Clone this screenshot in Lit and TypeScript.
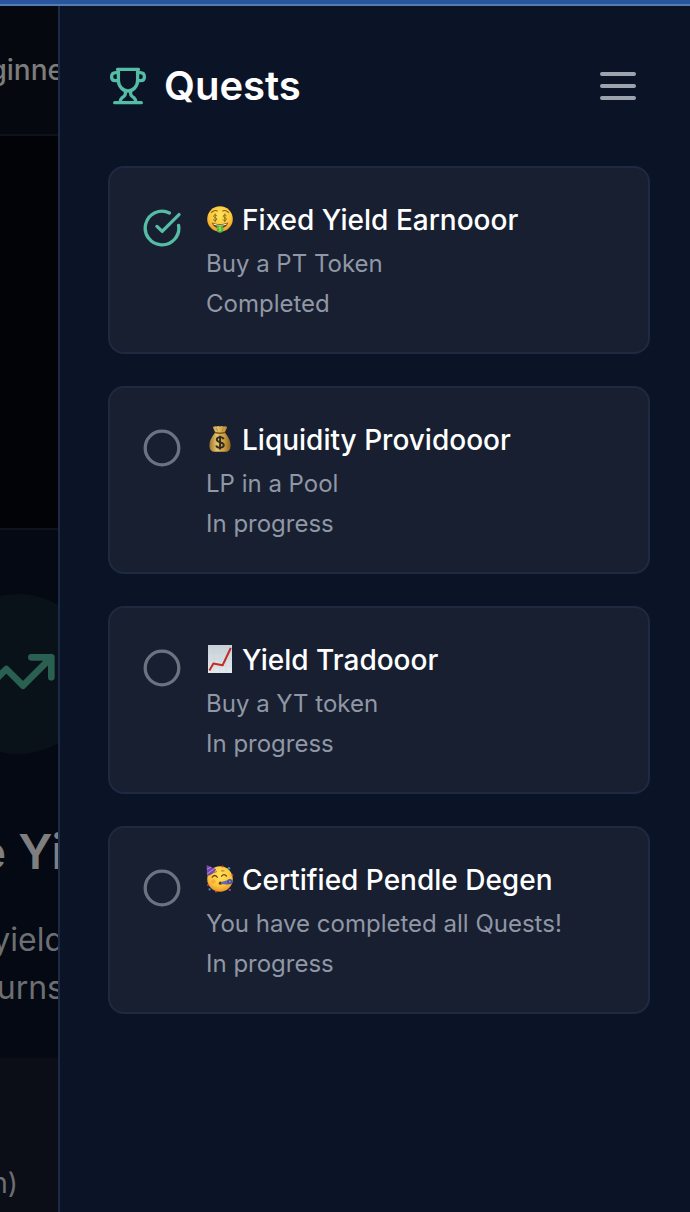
import { LitElement, html, css, svg, TemplateResult } from "lit";
import { customElement, property } from "lit/decorators.js";

interface Quest {
  emoji: string;
  title: string;
  description: string;
  done: boolean;
}

const quests: Quest[] = [
  { emoji: "money-face", title: "Fixed Yield Earnooor", description: "Buy a PT Token", done: true },
  { emoji: "money-bag", title: "Liquidity Providooor", description: "LP in a Pool", done: false },
  { emoji: "chart", title: "Yield Tradooor", description: "Buy a YT token", done: false },
  { emoji: "party-face", title: "Certified Pendle Degen", description: "You have completed all Quests!", done: false },
];

const face = svg`
  <defs>
    <radialGradient id="skin" cx="50%" cy="35%" r="65%">
      <stop offset="0" stop-color="#ffe45c"></stop>
      <stop offset="0.65" stop-color="#fcc63a"></stop>
      <stop offset="1" stop-color="#e8952a"></stop>
    </radialGradient>
  </defs>
  <circle cx="14" cy="13" r="12.8" fill="url(#skin)"></circle>`;

const emojis: Record<string, TemplateResult> = {
  "money-face": svg`
    ${face}
    <path d="M5.5 6.4Q8.5 3.6 11.3 5M16.7 5Q19.5 3.6 22.5 6.4" fill="none" stroke="#8a5a16" stroke-width="1.1" stroke-linecap="round"></path>
    <g fill="none" stroke="#8a701c" stroke-width="1" stroke-linecap="round">
      <path d="M10.8 9.8C9.6 8.4 7.4 8.9 7.6 10.3C7.8 11.8 10.7 11.4 10.8 13.1C10.8 14.8 8.2 15.1 7.2 13.7M9.2 8V15.8"></path>
      <path d="M20.4 9.8C19.2 8.4 17 8.9 17.2 10.3C17.4 11.8 20.3 11.4 20.4 13.1C20.4 14.8 17.8 15.1 16.8 13.7M18.8 8V15.8"></path>
    </g>
    <path d="M5.8 16.6Q14 20 22.2 16.6Q20.6 22.4 14 22.4Q7.4 22.4 5.8 16.6Z" fill="#72400f"></path>
    <path d="M7.2 17.6Q14 20.2 20.8 17.6L20.2 18.8Q14 21 7.8 18.8Z" fill="#fff6df"></path>
    <path d="M10.8 19.2Q14 20 17.2 19.2V24.4Q16.4 26.8 14 26.8Q11.6 26.8 10.8 24.4Z" fill="#50b83b"></path>
    <path d="M14.9 21.2Q13 20.7 13.1 22.1Q14.9 22.6 14.9 23.8Q14.4 24.9 13 24.3" fill="none" stroke="#bdf089" stroke-width="0.9"></path>`,
  "money-bag": svg`
    <defs>
      <linearGradient id="bag" x1="0" x2="1">
        <stop offset="0" stop-color="#9d7427"></stop>
        <stop offset="0.35" stop-color="#e5c46d"></stop>
        <stop offset="0.7" stop-color="#c99c40"></stop>
        <stop offset="1" stop-color="#8b641f"></stop>
      </linearGradient>
    </defs>
    <path d="M9.2 6.4L6.8 1.2Q8.6 -.2 10.4 .6Q12.2 -.6 14 .4Q16 -.6 17.6 .6Q19.6 -.2 21.2 1.2L18.8 6.4Q25 13.6 24.6 20.2Q24.2 25.6 19.4 25.8H8.6Q3.8 25.6 3.4 20.2Q3 13.6 9.2 6.4Z" fill="url(#bag)"></path>
    <path d="M8.8 6.4Q14 8 19.2 6.4" fill="none" stroke="#7a551a" stroke-width="1.5"></path>
    <path d="M10.4 1.8L11.6 5.4M17.2 1.8L16.2 5.4" stroke="#a77c30" stroke-width="0.8"></path>
    <path d="M17.6 13.2C16.8 10.4 10.8 10.4 10.8 13.8C10.8 17.2 17.8 15.4 17.8 19C17.8 22.4 11 22.6 10.2 19.4M14.1 9.8V23.4" fill="none" stroke="#302b1e" stroke-width="1.9"></path>`,
  chart: svg`
    <defs>
      <linearGradient id="paper" x1="0" y1="0" x2="0" y2="1">
        <stop offset="0" stop-color="#c5d0d8"></stop>
        <stop offset="1" stop-color="#e4eaee"></stop>
      </linearGradient>
    </defs>
    <rect x="2" y="-1" width="24" height="28" fill="url(#paper)"></rect>
    <path d="M8 -1V27M14 -1V27M20 -1V27M2 6H26M2 13H26M2 20H26" stroke="#bfcbd3" stroke-width="0.3"></path>
    <path d="M3.4 24.4L7.4 17.4L16.6 19.2L24.8 2" fill="none" stroke="#c42c24" stroke-width="2" stroke-linejoin="round"></path>`,
  "party-face": svg`
    ${face}
    <path d="M1 10L.6 -1L10.2 3.2Q7.4 8.8 1 10Z" fill="#7546ad"></path>
    <path d="M1 3.2L5 1.2M1.2 7.8L8.4 2.8" stroke="#b27bd4" stroke-width="1.1"></path>
    <path d="M6.2 11.2Q8.8 7.8 11.2 11.2M15.6 10.2Q18 7.2 20.4 10" fill="none" stroke="#6d430f" stroke-width="1.3" stroke-linecap="round"></path>
    <path d="M8 6.6L10.6 5.6M15.4 4.8L18 5" stroke="#a46a1b" stroke-width="0.9" stroke-linecap="round"></path>
    <circle cx="7.4" cy="15.4" r="2.2" fill="#f29a3c" opacity="0.6"></circle>
    <circle cx="14.4" cy="17.2" r="1.6" fill="#6e3513"></circle>
    <path d="M15.2 16L22.4 14V18.8L15.2 18Z" fill="#6269b4"></path>
    <circle cx="23.8" cy="15.6" r="2.6" fill="#4d4f9a"></circle>
    <circle cx="23.8" cy="15.6" r="1" fill="#9585cc"></circle>
    <circle cx="16.6" cy="0.6" r="1" fill="#dd3c3c"></circle>
    <circle cx="23" cy="2.2" r="1.2" fill="#4285cf"></circle>
    <circle cx="26.4" cy="9" r="1" fill="#d43b50"></circle>
    <circle cx="2" cy="19" r="1" fill="#d43b50"></circle>
    <circle cx="3.6" cy="23.4" r="1.1" fill="#498bd2"></circle>
    <circle cx="10" cy="25.4" r="1" fill="#d94632"></circle>
    <circle cx="23.8" cy="24" r="1.1" fill="#be4390"></circle>`,
};

@customElement("quest-card")
class QuestCard extends LitElement {
  @property({ attribute: false }) quest!: Quest;

  static styles = css`
    :host {
      display: block;
    }
    .card {
      display: flex;
      gap: 24px;
      padding: 32px;
      border: 2px solid #1e2a41;
      border-radius: 16px;
      background: #181f31;
    }
    .status {
      flex: none;
      width: 40px;
      height: 40px;
      margin-top: 8px;
      fill: none;
      stroke: #6b7280;
      stroke-width: 3.3;
      stroke-linecap: round;
      stroke-linejoin: round;
    }
    .done {
      stroke: #55bda6;
    }
    .body {
      display: grid;
      gap: 8px;
      min-width: 0;
    }
    .title {
      display: flex;
      align-items: center;
      gap: 8px;
      margin: 0;
      font-size: 28px;
      line-height: 40px;
      font-weight: 450;
      color: #ffffff;
    }
    .emoji {
      flex: none;
      width: 28px;
      height: 28px;
      overflow: visible;
    }
    .line {
      margin: 0;
      font-size: 24px;
      line-height: 32px;
      color: #9097a5;
    }
  `;

  render() {
    const { emoji, title, description, done } = this.quest;
    return html`
      <article class="card">
        ${done
          ? html`<svg class="status done" viewBox="0 0 40 40" aria-hidden="true">
              <path d="M36.6 17.4A16.8 16.8 0 1 1 27.4 5M15 18.4L20.2 23.4L37 6.6"></path>
            </svg>`
          : html`<svg class="status" viewBox="0 0 40 40" aria-hidden="true">
              <circle cx="20" cy="20" r="16.8"></circle>
            </svg>`}
        <div class="body">
          <h3 class="title">
            <svg class="emoji" viewBox="0 0 28 28" aria-hidden="true">${emojis[emoji]}</svg>
            <span>${title}</span>
          </h3>
          <p class="line">${description}</p>
          <p class="line">${done ? "Completed" : "In progress"}</p>
        </div>
      </article>
    `;
  }
}

@customElement("app-root")
class AppRoot extends LitElement {
  static styles = css`
    :host {
      display: flex;
      flex-direction: column;
      min-height: 100vh;
      background: #0b1426;
      font-family: Inter, "Liberation Sans", sans-serif;
    }
    .banner {
      height: 4px;
      background: #28559c;
      border-bottom: 2px solid #527cb3;
    }
    .layout {
      flex: 1;
      display: grid;
      grid-template-columns: 58px minmax(0, 1fr);
    }
    .page {
      display: flex;
      flex-direction: column;
      overflow: hidden;
      background: #040913;
      color: #6d6f72;
      white-space: nowrap;
    }
    .row {
      display: flex;
      justify-content: flex-end;
      margin-right: -6px;
    }
    .level {
      padding: 46px 0;
      border-bottom: 2px solid #0d131e;
      background: #05090f;
      font-size: 28px;
      line-height: 36px;
      font-weight: 500;
      color: #7c7c7c;
    }
    .media {
      height: 392px;
      border-bottom: 2px solid #0e131f;
      background: #020306;
    }
    .badge {
      flex: none;
      display: grid;
      place-items: center;
      width: 160px;
      height: 160px;
      margin: 64px -34px 66px 0;
      border-radius: 50%;
      background: #091218;
    }
    .trend {
      width: 80px;
      height: 80px;
      fill: none;
      stroke: #2a6052;
      stroke-width: 2;
      stroke-linecap: round;
      stroke-linejoin: round;
    }
    .headline {
      margin-top: 0;
      margin-bottom: 32px;
      font-size: 48px;
      line-height: 64px;
      font-weight: 600;
      color: #7f7f7f;
    }
    .copy {
      margin-top: 0;
      margin-bottom: 0;
      font-size: 32px;
      line-height: 48px;
    }
    .panel {
      flex: 1;
      align-items: flex-start;
      margin-top: 46px;
      padding: 107px 46px 0 0;
      background: #0b0e17;
      font-size: 28px;
      line-height: 36px;
    }
    .drawer {
      padding: 56px 40px 56px 48px;
      border-left: 2px solid #1c2a45;
      background: #0b1426;
    }
    .head {
      display: flex;
      align-items: center;
      justify-content: space-between;
      padding-right: 8px;
      margin-bottom: 56px;
    }
    .name {
      display: flex;
      align-items: center;
      gap: 16px;
      margin: 0;
      font-size: 40px;
      line-height: 48px;
      font-weight: 600;
      color: #ffffff;
    }
    .trophy {
      width: 40px;
      height: 40px;
      fill: none;
      stroke: #55bda6;
      stroke-width: 3.3;
      stroke-linecap: round;
      stroke-linejoin: round;
    }
    .menu {
      display: block;
      width: 48px;
      height: 48px;
      padding: 0;
      border: 0;
      background: none;
      cursor: pointer;
    }
    .bars {
      display: block;
      stroke: #9ca3af;
      stroke-width: 2;
      stroke-linecap: round;
    }
    .list {
      display: grid;
      gap: 32px;
      margin: 0;
      padding: 0;
      list-style: none;
    }
  `;

  render() {
    return html`
      <div class="banner"></div>
      <div class="layout">
        <div class="page">
          <div class="row level"><span>ginne</span></div>
          <div class="media"></div>
          <div class="row">
            <div class="badge">
              <svg class="trend" viewBox="0 0 24 24" aria-hidden="true">
                <path d="M22 7L13.5 15.5L8.5 10.5L2 17M16 7H22V13"></path>
              </svg>
            </div>
          </div>
          <h2 class="row headline"><span>e Yi</span></h2>
          <p class="row copy"><span>yield</span></p>
          <p class="row copy"><span>urns</span></p>
          <div class="row panel"><span>n)</span></div>
        </div>
        <aside class="drawer">
          <header class="head">
            <h2 class="name">
              <svg class="trophy" viewBox="0 0 40 40" aria-hidden="true">
                <path d="M9.5 3.4H30.5M10.4 3.4V14.5C10.4 20.5 15 25 20 25S29.6 20.5 29.6 14.5V3.4"></path>
                <path d="M10.2 6.6H7.6Q3.6 6.6 3.6 11Q3.6 14.6 7.2 14.6H10.2M29.8 6.6H32.4Q36.4 6.6 36.4 11Q36.4 14.6 32.8 14.6H29.8"></path>
                <path d="M17.4 25.2V27.6Q17.4 29 16 30.2L14 31.8Q12.4 33.2 12 36.6M22.6 25.2V27.6Q22.6 29 24 30.2L26 31.8Q27.6 33.2 28 36.6M6.7 36.7H33.3"></path>
              </svg>
              <span>Quests</span>
            </h2>
            <button class="menu" type="button" aria-label="Menu">
              <svg class="bars" width="48" height="48" viewBox="0 0 24 24" aria-hidden="true">
                <path d="M4 6H20M4 12H20M4 18H20"></path>
              </svg>
            </button>
          </header>
          <ul class="list">
            ${quests.map((quest) => html`<li><quest-card .quest=${quest}></quest-card></li>`)}
          </ul>
        </aside>
      </div>
    `;
  }
}
